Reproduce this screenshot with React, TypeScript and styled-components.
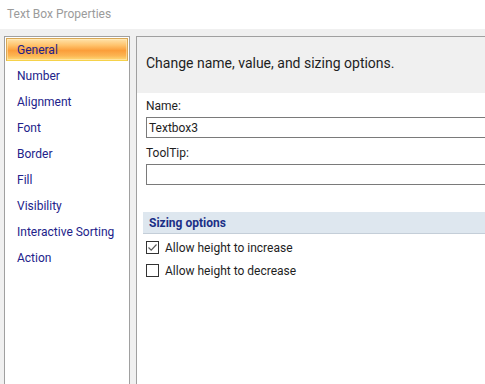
import styled, { createGlobalStyle } from "styled-components";

const GlobalStyle = createGlobalStyle`
  html, body {
    margin: 0;
    padding: 0;
    background: #f0f0f0;
  }
  body {
    font-family: Roboto, "Noto Sans", sans-serif;
    font-size: 12px;
    color: #1e1e1e;
  }
`;

const Window = styled.div`
  width: 485px;
  height: 384px;
  display: flex;
  flex-direction: column;
  overflow: hidden;
  background: #f0f0f0;
`;

const TitleBar = styled.div`
  height: 29px;
  flex: none;
  background: #ffffff;
  color: #9b9b9b;
  font-size: 12px;
  padding-left: 7px;
  display: flex;
  align-items: center;
  padding-bottom: 2px;
  box-sizing: border-box;
`;

const Body = styled.div`
  flex: 1;
  display: flex;
  gap: 6px;
  padding: 7px 0 0 4px;
  min-height: 0;
`;

const NavPanel = styled.nav`
  width: 126px;
  flex: none;
  background: #ffffff;
  border: 1px solid #a0a0a0;
  border-bottom: none;
  box-sizing: border-box;
  padding: 1px 1px 0 1px;
  display: flex;
  flex-direction: column;
`;

const NavItem = styled.div<{ $active?: boolean }>`
  height: 26px;
  box-sizing: border-box;
  padding: 2px 0 0 11px;
  display: flex;
  align-items: center;
  color: #22228a;
  font-size: 12px;
  ${(p) =>
    p.$active &&
    `
    height: 23px;
    margin-bottom: 1px;
    border: 1px solid #d9a855;
    border-bottom-color: #f6d24a;
    background: linear-gradient(
      to bottom,
      #ffe3aa 0%,
      #ffc36c 30%,
      #fb9e3a 55%,
      #fcb553 80%,
      #ffdc78 100%
    );
    box-shadow: inset 0 0 0 1px rgba(255, 240, 200, 0.5);
    padding: 0 0 0 10px;
  `}
`;

const ContentPanel = styled.section`
  flex: 1;
  display: flex;
  flex-direction: column;
  border-left: 1px solid #a0a0a0;
  border-top: 1px solid #a0a0a0;
  min-width: 0;
`;

const PanelHeader = styled.div`
  height: 56px;
  flex: none;
  box-sizing: border-box;
  background: #f0f0f0;
  padding: 0 0 5px 9px;
  display: flex;
  align-items: center;
  font-size: 14px;
  color: #1e1e1e;
`;

const PanelBody = styled.div`
  flex: 1;
  background: #ffffff;
  padding: 4px 0 0 9px;
  display: flex;
  flex-direction: column;
`;

const FieldLabel = styled.label`
  display: block;
  height: 18px;
  line-height: 18px;
  font-size: 12px;
  margin-bottom: 2px;
`;

const TextInput = styled.div`
  height: 21px;
  box-sizing: border-box;
  border: 1px solid #7a7a7a;
  border-right: none;
  padding-left: 2px;
  display: flex;
  align-items: center;
  font-size: 12px;
  margin-bottom: 6px;
`;

const SectionHeader = styled.div`
  margin: 21px 0 0 -3px;
  height: 22px;
  box-sizing: border-box;
  background: #dee7ef;
  border-bottom: 1px solid #c4ced8;
  padding-left: 6px;
  display: flex;
  align-items: center;
  font-weight: 700;
  font-size: 12px;
  color: #1b2f86;
`;

const CheckList = styled.div`
  padding-top: 2px;
  display: flex;
  flex-direction: column;
`;

const CheckRow = styled.div`
  display: flex;
  align-items: center;
  gap: 6px;
  height: 23px;
  font-size: 12px;
`;

const Box = styled.span`
  width: 13px;
  height: 13px;
  box-sizing: border-box;
  border: 1px solid #333333;
  background: #ffffff;
  display: flex;
  align-items: center;
  justify-content: center;
  flex: none;
`;

const Check = ({ checked }: { checked?: boolean }) => (
  <Box>
    {checked && (
      <svg width="11" height="11" viewBox="0 0 11 11">
        <path d="M1.5 5.5 L4.2 8.2 L9.5 2.5" fill="none" stroke="#5a5a5a" strokeWidth="1.2" />
      </svg>
    )}
  </Box>
);

const navItems = [
  "General",
  "Number",
  "Alignment",
  "Font",
  "Border",
  "Fill",
  "Visibility",
  "Interactive Sorting",
  "Action",
];

export default function App() {
  return (
    <>
      <GlobalStyle />
      <Window>
        <TitleBar>Text Box Properties</TitleBar>
        <Body>
          <NavPanel>
            {navItems.map((item, i) => (
              <NavItem key={item} $active={i === 0}>
                {item}
              </NavItem>
            ))}
          </NavPanel>
          <ContentPanel>
            <PanelHeader>Change name, value, and sizing options.</PanelHeader>
            <PanelBody>
              <FieldLabel>Name:</FieldLabel>
              <TextInput>Textbox3</TextInput>
              <FieldLabel>ToolTip:</FieldLabel>
              <TextInput />
              <SectionHeader>Sizing options</SectionHeader>
              <CheckList>
                <CheckRow>
                  <Check checked />
                  Allow height to increase
                </CheckRow>
                <CheckRow>
                  <Check />
                  Allow height to decrease
                </CheckRow>
              </CheckList>
            </PanelBody>
          </ContentPanel>
        </Body>
      </Window>
    </>
  );
}
